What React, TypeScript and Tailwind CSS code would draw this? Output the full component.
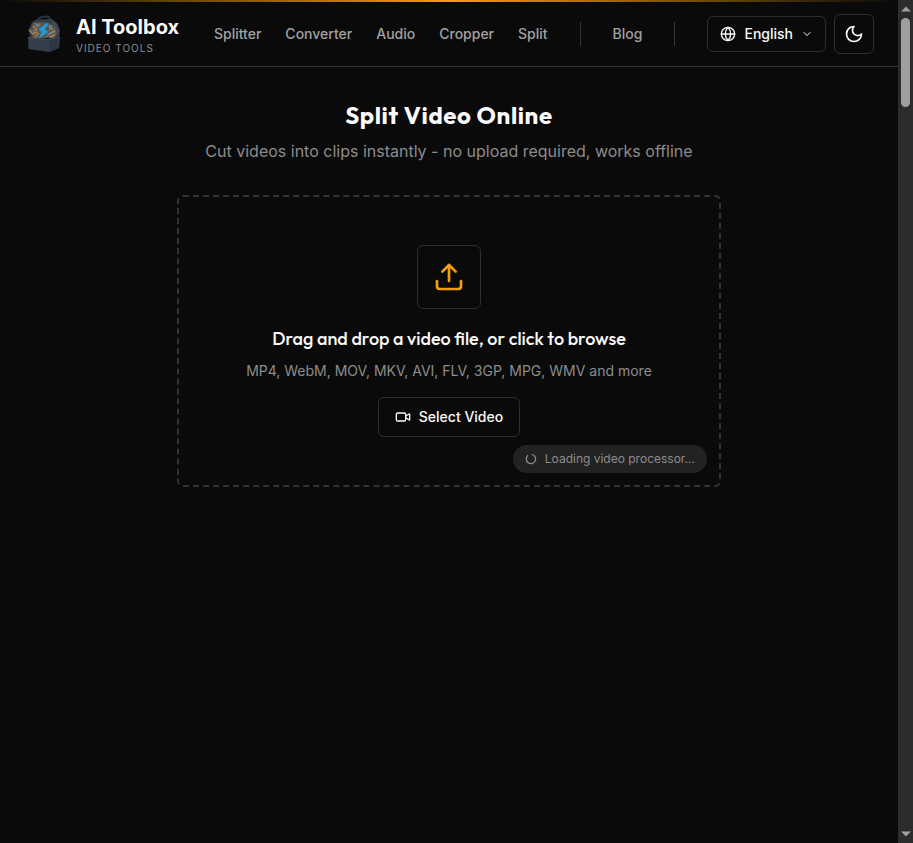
import { ChevronDown, Globe, Video } from "lucide-react";

const toolLinks = ["Splitter", "Converter", "Audio", "Cropper", "Split"];

function ToolboxLogo() {
  return (
    <svg viewBox="0 0 40 40" className="h-10 w-10" aria-hidden="true">
      <path
        d="M14 7 Q14 3.5 18 3 L23 2.5 Q26 3 26 6"
        fill="none"
        stroke="#2b313b"
        strokeWidth="2"
      />
      <path
        d="M8 8 L12 5.5 L28 5 L33 9 L36 16 L35 24 L6 24 L5 15 Z"
        fill="#343a44"
      />
      <path d="M27 6 L32 9 L35.5 17 L34 22 L30 15 Z" fill="#444a54" />
      <path
        d="M4.5 16 L8 13 L9 9 L15 8 L25 9 L31 13 L33 20 L30 24 L8 24 L9 20 Z"
        fill="#5a5750"
      />
      <path
        d="M5 16 l3 3 M9 12 l4 4 M8 20 l5 -2 M11 23 l4 -4 M25 12 l4 4 M25 20 l6 -3 M26 23 l5 -2"
        stroke="#a3835a"
        strokeWidth="1.4"
      />
      <path
        d="M11 9 l3 3 M9 17 l4 -1 M28 11 l-3 5 M23 22 l5 -4 M13 13 l3 -3"
        stroke="#788590"
        strokeWidth="1.2"
      />
      <path
        d="M22.5 9 L14.5 15.5 L17.5 18 L15 24 L24.5 18 L20.5 15 L25 10 Z"
        fill="#209bd8"
      />
      <path d="M4 23.5 L24 25 L36 23 L35 34 L25 38 L4.5 35 Z" fill="#353e4b" />
      <path
        d="M4 23.5 L24 25.5 L36 23"
        fill="none"
        stroke="#465160"
        strokeWidth="1"
      />
      <path d="M25 26 L36 23 L35 34 L25 38 Z" fill="#2f3743" />
    </svg>
  );
}

function MoonIcon() {
  return (
    <svg
      viewBox="0 0 24 24"
      className="h-5 w-5"
      fill="none"
      stroke="currentColor"
      strokeWidth="2"
      strokeLinecap="round"
      strokeLinejoin="round"
      aria-hidden="true"
    >
      <path d="M12 3a6 6 0 0 0 9 9 9 9 0 1 1-9-9Z" />
    </svg>
  );
}

function UploadIcon() {
  return (
    <svg
      viewBox="0 0 24 24"
      className="h-8 w-8 text-[#f59e0b]"
      fill="none"
      stroke="currentColor"
      strokeWidth="2"
      strokeLinecap="round"
      strokeLinejoin="round"
      aria-hidden="true"
    >
      <path d="M21 15v4a2 2 0 0 1-2 2H5a2 2 0 0 1-2-2v-4" />
      <path d="M17 8l-5-5-5 5" />
      <path d="M12 3v12" />
    </svg>
  );
}

function Header() {
  return (
    <header className="border-b border-[#333333]">
      <div className="h-0.5 bg-linear-to-r from-transparent via-[#f59e0b] to-transparent" />
      <div className="flex items-center justify-between px-6 py-[11px]">
        <a href="#home" className="flex items-center gap-3">
          <ToolboxLogo />
          <span className="flex flex-col">
            <span className="text-xl leading-7 font-bold text-[#fafafa]">
              AI Toolbox
            </span>
            <span className="text-[10px] leading-[14px] tracking-widest text-[#8c8c8c] uppercase">
              Video Tools
            </span>
          </span>
        </a>
        <div className="flex items-center gap-8">
          <nav className="flex items-center gap-8 text-sm font-medium text-[#a1a1a1]">
            <div className="flex items-center gap-6">
              {toolLinks.map((link) => (
                <a key={link} href={`#${link.toLowerCase()}`}>
                  {link}
                </a>
              ))}
            </div>
            <div className="h-6 w-px bg-[#333333]" />
            <a href="#blog">Blog</a>
            <div className="h-6 w-px bg-[#333333]" />
          </nav>
          <div className="flex items-center gap-2 text-[#fafafa]">
            <button
              type="button"
              className="flex h-9 items-center gap-2 rounded-md border border-[#2e2e2e] px-3 text-sm font-medium"
            >
              <Globe className="h-4 w-4" />
              English
              <ChevronDown className="h-3 w-3" />
            </button>
            <button
              type="button"
              aria-label="Toggle theme"
              className="flex h-10 w-10 items-center justify-center rounded-md border border-[#2e2e2e]"
            >
              <MoonIcon />
            </button>
          </div>
        </div>
      </div>
    </header>
  );
}

function DropZone() {
  return (
    <section className="relative flex flex-col items-center rounded-md border-2 border-dashed border-[#333333] p-12 text-center">
      <div className="flex h-16 w-16 items-center justify-center rounded-md border border-[#2e2e2e]">
        <UploadIcon />
      </div>
      <h2 className="mt-4 font-[Outfit,Lato,sans-serif] text-lg leading-7 font-medium text-[#fafafa]">
        Drag and drop a video file, or click to browse
      </h2>
      <p className="mt-2 text-sm text-[#8c8c8c]">
        MP4, WebM, MOV, MKV, AVI, FLV, 3GP, MPG, WMV and more
      </p>
      <button
        type="button"
        className="mt-4 flex h-10 items-center gap-2 rounded-md border border-[#2e2e2e] px-4 text-sm font-medium text-[#fafafa]"
      >
        <Video className="h-4 w-4" />
        Select Video
      </button>
      <div className="absolute right-3 bottom-3 flex items-center gap-2 rounded-full bg-[#222222] px-3 py-1.5 text-xs text-[#8c8c8c]">
        <svg viewBox="0 0 12 12" className="h-3 w-3" aria-hidden="true">
          <path
            d="M7.3 1.5A4.7 4.7 0 1 1 2.6 2.7"
            fill="none"
            stroke="currentColor"
            strokeWidth="1.3"
            strokeLinecap="round"
          />
        </svg>
        Loading video processor...
      </div>
    </section>
  );
}

function ScrollTrack() {
  return (
    <div
      className="sticky top-0 flex h-screen w-[15px] shrink-0 flex-col items-center justify-between bg-[#2c2c2c] py-1.5"
      aria-hidden="true"
    >
      <div className="flex flex-col items-center gap-1.5">
        <svg viewBox="0 0 10 6" className="h-1.5 w-2.5">
          <path d="M0 5.5L5 0.5L10 5.5Z" fill="#9f9f9f" />
        </svg>
        <div className="h-[89px] w-[9px] rounded-full bg-[#9f9f9f]" />
      </div>
      <svg viewBox="0 0 10 6" className="h-1.5 w-2.5">
        <path d="M0 0.5L5 5.5L10 0.5Z" fill="#9f9f9f" />
      </svg>
    </div>
  );
}

export default function App() {
  return (
    <div className="flex min-h-screen bg-[#0a0a0a] font-[Inter,sans-serif]">
      <div className="min-w-0 flex-1">
        <Header />
        <main className="mx-auto max-w-xl px-4 py-8">
          <div className="mb-8 text-center">
            <h1 className="font-[Outfit,Lato,sans-serif] text-2xl leading-8 font-bold tracking-wide text-[#fafafa]">
              Split Video Online
            </h1>
            <p className="mt-2 text-base text-[#8c8c8c]">
              Cut videos into clips instantly - no upload required, works
              offline
            </p>
          </div>
          <DropZone />
        </main>
      </div>
      <ScrollTrack />
    </div>
  );
}
